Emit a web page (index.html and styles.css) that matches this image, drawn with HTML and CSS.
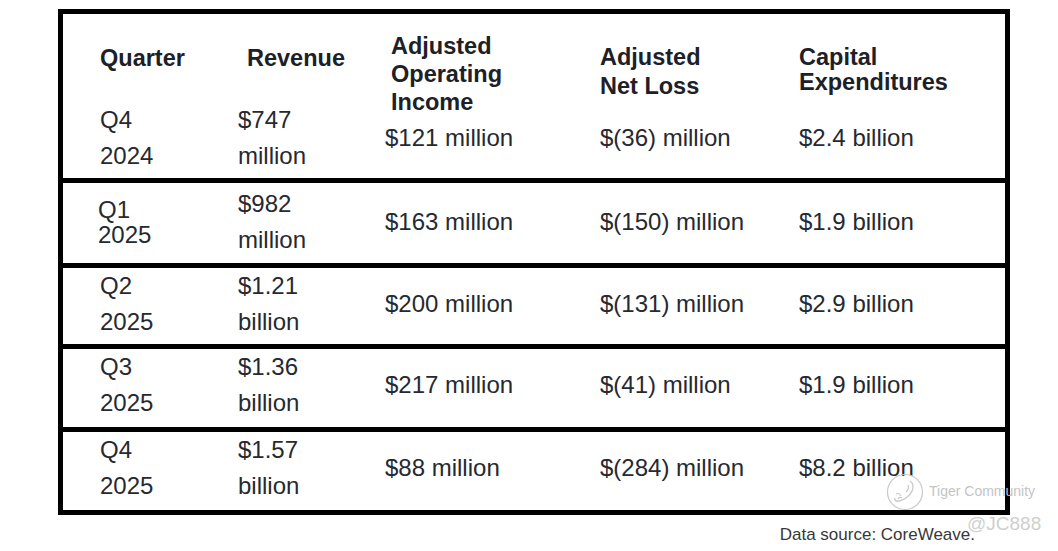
FILE: index.html
```html
<!DOCTYPE html>
<html lang="en">
<head>
<meta charset="utf-8">
<title>CoreWeave quarterly results</title>
<link rel="stylesheet" href="styles.css">
</head>
<body>
<div class="page">
  <div class="table">
    <div class="block first">
      <div class="head">
        <div class="hc h-q">Quarter</div>
        <div class="hc h-rev">Revenue</div>
        <div class="hc h-op">Adjusted<br>Operating<br>Income</div>
        <div class="hc h-nl">Adjusted<br>Net Loss</div>
        <div class="hc h-cap">Capital<br>Expenditures</div>
      </div>
      <div class="row r1">
        <div class="c two">Q4<br>2024</div>
        <div class="c two">$747<br>million</div>
        <div class="c">$121 million</div>
        <div class="c">$(36) million</div>
        <div class="c">$2.4 billion</div>
      </div>
    </div>
    <div class="row r2">
      <div class="c tight">Q1<br>2025</div>
      <div class="c two">$982<br>million</div>
      <div class="c">$163 million</div>
      <div class="c">$(150) million</div>
      <div class="c">$1.9 billion</div>
    </div>
    <div class="row r3">
      <div class="c two">Q2<br>2025</div>
      <div class="c two">$1.21<br>billion</div>
      <div class="c">$200 million</div>
      <div class="c">$(131) million</div>
      <div class="c">$2.9 billion</div>
    </div>
    <div class="row r4">
      <div class="c two">Q3<br>2025</div>
      <div class="c two">$1.36<br>billion</div>
      <div class="c">$217 million</div>
      <div class="c">$(41) million</div>
      <div class="c">$1.9 billion</div>
    </div>
    <div class="row r5">
      <div class="c two">Q4<br>2025</div>
      <div class="c two">$1.57<br>billion</div>
      <div class="c">$88 million</div>
      <div class="c">$(284) million</div>
      <div class="c">$8.2 billion</div>
    </div>
  </div>
  <div class="source">Data source: CoreWeave.</div>

  <div class="watermark">
    <svg class="wm-logo" width="40" height="40" viewBox="0 0 40 40">
      <circle cx="20" cy="20" r="17.5" fill="none" stroke="#c9c9c9" stroke-width="1.2"/>
      <path d="M25 9c3 2 4 6 2 10-2 5-8 9-13 10-3 1-5-1-4-3" fill="none" stroke="#c9c9c9" stroke-width="1.4"/>
      <path d="M23 13c1 2 0 5-2 7" fill="none" stroke="#c9c9c9" stroke-width="1.2"/>
      <path d="M11 22c2-1 4 0 5 2M13 27c1-2 3-2 4-1" fill="none" stroke="#c9c9c9" stroke-width="1.1"/>
    </svg>
    <span class="wm-text">Tiger Community</span>
    <span class="wm-user">@JC888</span>
  </div>
</div>
</body>
</html>
```
FILE: styles.css
```css
* { box-sizing: border-box; }
html, body { margin: 0; padding: 0; background: #ffffff; }
body {
  font-family: "Liberation Sans", Arial, sans-serif;
  color: #26292f;
  overflow: hidden;
}
.page {
  position: relative;
  width: 1058px;
  height: 551px;
  padding: 9px 0 0 58px;
}
.table {
  width: 952px;
  border: 5px solid #000;
  display: flex;
  flex-direction: column;
}
.block.first { border-bottom: 5px solid #000; }
.head, .row {
  display: grid;
  grid-template-columns: 138px 147px 215px 199px 1fr;
  padding-left: 37px;
}
.head {
  height: 88px;
  align-items: start;
  font-weight: 700;
  font-size: 23.5px;
  color: #1d2027;
}
.hc { white-space: nowrap; }
.h-q { padding-top: 30px; line-height: 28px; }
.h-rev { padding-top: 30px; line-height: 28px; padding-left: 9px; }
.h-op { padding-top: 18px; line-height: 28px; padding-left: 6px; }
.h-nl { padding-top: 29px; line-height: 29px; padding-left: 0; }
.h-cap { padding-top: 31px; line-height: 25px; padding-left: 0; }

.row {
  align-items: center;
  font-size: 24px;
  line-height: 28px;
}
.c { white-space: nowrap; }
.c.two { line-height: 36px; }
.c.tight { line-height: 25px; padding-left: 0; }
.row .c:nth-child(4) { padding-left: 0; }
.row .c:nth-child(5) { padding-left: 0; }

.r1 { height: 76px; padding-bottom: 4px; }
.r1 .c.two { align-self: start; }
.r2 { height: 85px; padding-bottom: 2px; border-bottom: 5px solid #000; }
.r2 .c.tight { margin-left: -2px; }
.r3 { height: 81px; padding-bottom: 6px; border-bottom: 5px solid #000; }
.r4 { height: 83px; padding-bottom: 8px; border-bottom: 5px solid #000; }
.r5 { height: 78px; padding-bottom: 8px; }

.source {
  width: 952px;
  display: flex;
  justify-content: flex-end;
  padding-right: 35px;
  margin-top: 10px;
  font-size: 17px;
  line-height: 20px;
  color: #383838;
}

.watermark {
  position: absolute;
  left: 885px;
  top: 470px;
  width: 170px;
  height: 75px;
  pointer-events: none;
}
.wm-logo { position: absolute; left: 0; top: 2px; }
.wm-text {
  position: absolute;
  left: 44px;
  top: 13px;
  font-size: 14px;
  color: #c4c4c4;
  white-space: nowrap;
}
.wm-user {
  position: absolute;
  left: 82px;
  top: 43px;
  font-size: 19px;
  color: #cfcfcf;
  white-space: nowrap;
}
```
